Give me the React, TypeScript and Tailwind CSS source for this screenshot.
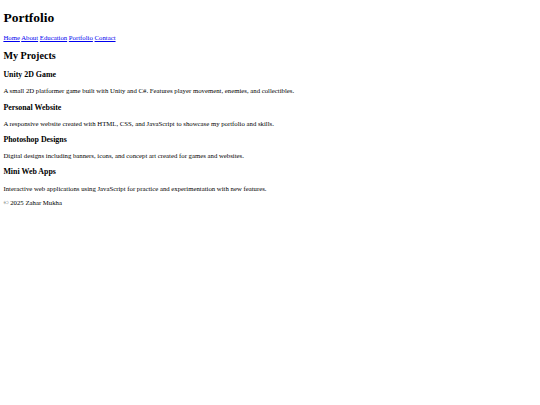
const projects = [
  {
    title: "Unity 2D Game",
    text: "A small 2D platformer game built with Unity and C#. Features player movement, enemies, and collectibles.",
  },
  {
    title: "Personal Website",
    text: "A responsive website created with HTML, CSS, and JavaScript to showcase my portfolio and skills.",
  },
  {
    title: "Photoshop Designs",
    text: "Digital designs including banners, icons, and concept art created for games and websites.",
  },
  {
    title: "Mini Web Apps",
    text: "Interactive web applications using JavaScript for practice and experimentation with new features.",
  },
];

const links = ["Home", "About", "Education", "Portfolio", "Contact"];

export default function App() {
  return (
    <div className="min-h-[405px] bg-white text-black font-['Liberation_Serif','Times_New_Roman',serif] text-[6.75px] leading-[normal]">
      <div className="m-[3.4px]">
        <header>
          <h1 className="mt-[9.6px] mb-[8.6px] text-[13.5px] font-bold">Portfolio</h1>
          <nav>
            {links.map((link, i) => (
              <span key={link}>
                <a href="#" className="text-[#0000EE] underline">
                  {link}
                </a>
                {i < links.length - 1 ? " " : null}
              </span>
            ))}
          </nav>
        </header>

        <main>
          <h2 className="my-[9px] text-[10.125px] font-bold">My Projects</h2>
          {projects.map((project) => (
            <section key={project.title}>
              <h3 className="my-[8.2px] text-[7.9px] font-bold">{project.title}</h3>
              <p className="my-[7px]">{project.text}</p>
            </section>
          ))}
        </main>

        <footer>
          <p className="my-[7px]">© 2025 Zahar Mukha</p>
        </footer>
      </div>
    </div>
  );
}
